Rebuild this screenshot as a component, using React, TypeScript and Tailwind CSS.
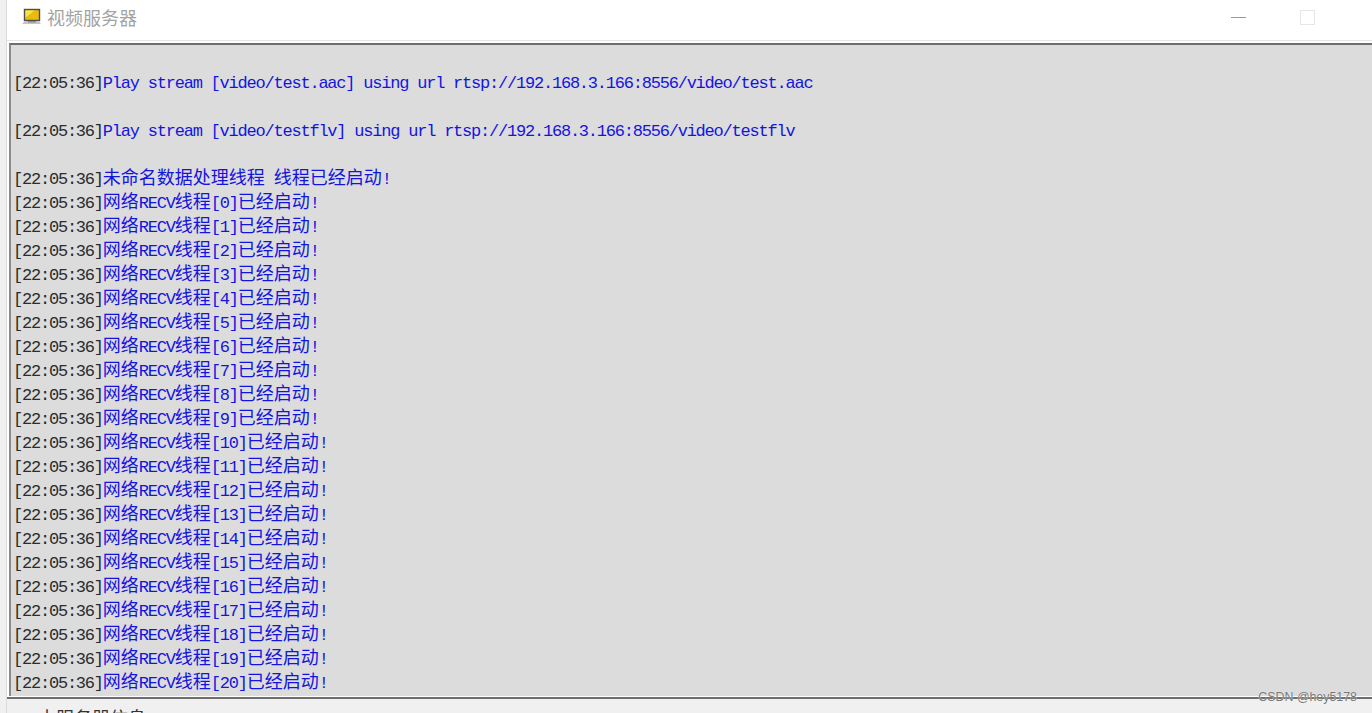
const CJK = '"Noto Sans CJK SC", sans-serif';

function Seg({ text, className }: { text: string; className: string }) {
  const parts = text.match(/[\u3000-\u9fff]+|[^\u3000-\u9fff]+/g) ?? [];
  return (
    <span className={className}>
      {parts.map((p, i) =>
        /[\u3000-\u9fff]/.test(p) ? (
          <span key={i}>{p}</span>
        ) : (
          <span key={i} className="text-[17px] tracking-[-1.22px] font-['Liberation_Mono',monospace] whitespace-pre">{p}</span>
        )
      )}
    </span>
  );
}

function Row({ msg }: { msg?: string }) {
  return (
    <div className="h-6 text-[18px] leading-[23px] font-['Noto_Sans_CJK_SC',sans-serif] whitespace-nowrap">
      {msg !== undefined && (
        <>
          <Seg text="[22:05:36]" className="text-[#2b2b2b]" />
          <Seg text={msg} className="text-[#1414e0]" />
        </>
      )}
    </div>
  );
}

export default function App() {
  const threads = Array.from({ length: 21 }, (_, i) => `网络RECV线程[${i}]已经启动!`);
  return (
    <div className="w-[1372px] h-[713px] overflow-hidden relative bg-[#f0f0f0] flex">
      <div className="w-[7px] shrink-0 bg-[#f0f0f0] border-r border-[#dcdcdc]" />
      <div className="flex-1 min-w-0 flex flex-col">
        <div className="h-[40px] bg-white flex items-start pl-[15px] pt-[5px] shrink-0" style={{ fontFamily: CJK }}>
          <svg width="20" height="18" viewBox="0 0 20 18" className="mt-[3px] mr-[5px] shrink-0">
            <rect x="2.5" y="1.5" width="15" height="11" fill="#e9bb0c" stroke="#4d4d4d" strokeWidth="1.4" />
            <path d="M3.5 2.5h9l-9 7z" fill="#f9e24f" />
            <path d="M0 16l3-3h14l2 3z" fill="#c4c4c4" />
            <path d="M6 13h8v1.5H6z" fill="#8c8c8c" />
          </svg>
          <span className="text-[18px] leading-6 text-[#a3a3a3]">视频服务器</span>
          <div className="ml-auto mr-[126px] mt-[12px] w-[15px] h-px bg-[#999999]" />
          <div className="absolute left-[1300px] top-[10px] w-[15px] h-[15px] border border-[#e6e6e6]" />
        </div>
        <div className="flex-1 min-h-0 bg-white border-t border-[#e4e4e4] flex flex-col">
          <div className="h-[653px] mt-[2px] ml-[2px] bg-[#dcdcdc] border-t-2 border-l-2 border-t-[#6e6e6e] border-l-[#8a8a8a] pl-[2px] overflow-hidden shrink-0">
            <Row />
            <Row msg="Play stream [video/test.aac] using url rtsp://192.168.3.166:8556/video/test.aac" />
            <Row />
            <Row msg="Play stream [video/testflv] using url rtsp://192.168.3.166:8556/video/testflv" />
            <Row />
            <Row msg="未命名数据处理线程 线程已经启动!" />
            {threads.map((t) => (
              <Row key={t} msg={t} />
            ))}
          </div>
          <div className="h-[3px] bg-[#6e6e6e] border-t border-white shrink-0" />
          <div className="flex-1 bg-[#f0f0f0] pl-[31px] pt-[6px] text-[18px] text-[#333] leading-6" style={{ fontFamily: CJK }}>
            本服务器信息
          </div>
        </div>
      </div>
      <div className="absolute right-[15px] top-[688px] text-[12.4px] text-[#777] font-['Liberation_Sans',sans-serif] [text-shadow:0_0_1px_#ffffff]">CSDN @hey5178</div>
    </div>
  );
}
